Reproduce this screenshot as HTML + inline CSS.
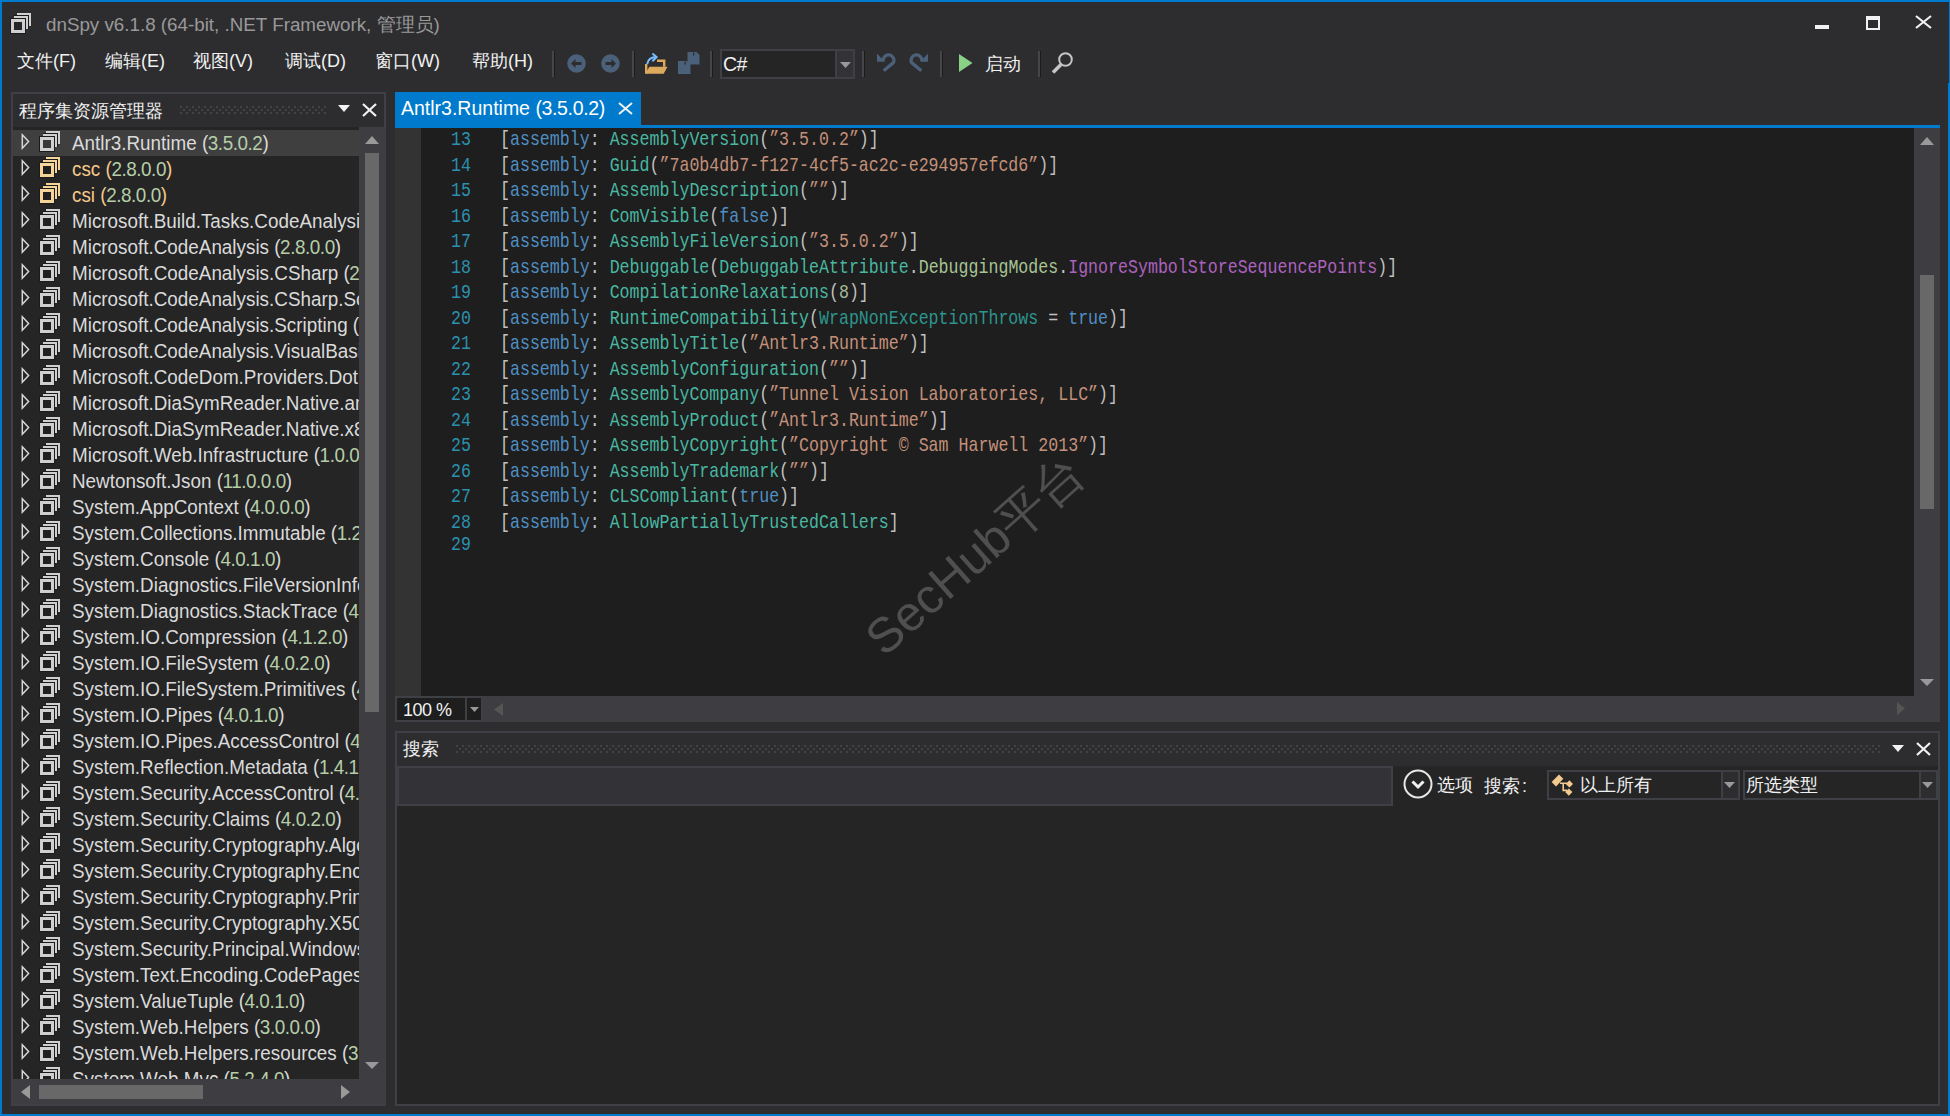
<!DOCTYPE html>
<html><head><meta charset="utf-8">
<style>
*{margin:0;padding:0;box-sizing:border-box}
html,body{width:1950px;height:1116px;overflow:hidden;background:#2d2d30}
body{position:relative;font-family:"Liberation Sans",sans-serif;color:#f1f1f1}
.a{position:absolute}
.t{position:absolute;white-space:nowrap;line-height:1}
.sep{position:absolute;top:51px;width:3px;height:26px;border-left:2px solid #46464a;border-right:1px solid #1b1b1c}

.tr{left:59px;font-size:19.3px;transform:scaleX(0.978);transform-origin:0 0}
.cl{position:absolute;left:0;white-space:pre;font-family:"Liberation Mono",monospace;font-size:16.63px;line-height:1;transform:scaleY(1.25);transform-origin:0 0}
.ln{display:inline-block;width:50px;text-align:right;margin-right:29px;color:#2b91af}
</style></head><body>
<!-- window border -->
<div class="a" style="left:0;top:0;width:1950px;height:2px;background:#007acc"></div>
<div class="a" style="left:0;top:0;width:2px;height:1116px;background:#007acc"></div>
<div class="a" style="left:1948px;top:83px;width:2px;height:1033px;background:#007acc"></div>
<div class="a" style="left:1949px;top:0;width:1px;height:83px;background:#007acc"></div>
<div class="a" style="left:0;top:1114px;width:1950px;height:2px;background:#007acc"></div>

<!-- title bar -->
<svg class="a" style="left:10px;top:12px" width="22" height="22" viewBox="0 0 22 22" fill="none"><path d="M7 2h13v12" stroke="#cfcfcf" stroke-width="2"/><path d="M4 5h13v12" stroke="#1b1b1c" stroke-width="4"/><path d="M4 5h13v12" stroke="#cfcfcf" stroke-width="2"/><rect x="1" y="7" width="14" height="14" fill="rgba(0,0,0,0.12)" stroke="#1b1b1c" stroke-width="2"/><path d="M2.5 8.5h11v11h-11z" stroke="#cfcfcf" stroke-width="3"/></svg>
<div class="t" id="title" style="left:46px;top:15.5px;font-size:18.8px;color:#999999">dnSpy v6.1.8 (64-bit, .NET Framework, 管理员)</div>
<div class="a" style="left:1815px;top:25px;width:14px;height:4px;background:#f1f1f1"></div>
<div class="a" style="left:1866px;top:16px;width:14px;height:14px;border:2px solid #f1f1f1;border-top-width:4px"></div>
<svg class="a" style="left:1915px;top:15px" width="17" height="14" viewBox="0 0 17 14"><path d="M1 1L16 13M16 1L1 13" stroke="#f1f1f1" stroke-width="2.2"/></svg>

<!-- menu -->
<div class="t" style="left:17px;top:52px;font-size:18px;color:#f1f1f1">文件(F)</div>
<div class="t" style="left:105px;top:52px;font-size:18px;color:#f1f1f1">编辑(E)</div>
<div class="t" style="left:193px;top:52px;font-size:18px;color:#f1f1f1">视图(V)</div>
<div class="t" style="left:285px;top:52px;font-size:18px;color:#f1f1f1">调试(D)</div>
<div class="t" style="left:375px;top:52px;font-size:18px;color:#f1f1f1">窗口(W)</div>
<div class="t" style="left:472px;top:52px;font-size:18px;color:#f1f1f1">帮助(H)</div>

<!-- toolbar -->
<div class="sep" style="left:552px"></div>
<svg class="a" style="left:567px;top:54px" width="19" height="19" viewBox="0 0 19 19"><circle cx="9.5" cy="9.5" r="9.3" fill="#4b6079"/><path d="M4 9.5L8.5 5v3h6v3h-6v3z" fill="#2d2d30"/></svg>
<svg class="a" style="left:601px;top:54px" width="19" height="19" viewBox="0 0 19 19"><circle cx="9.5" cy="9.5" r="9.3" fill="#4b6079"/><path d="M15 9.5L10.5 5v3h-6v3h6v3z" fill="#2d2d30"/></svg>
<div class="sep" style="left:632px"></div>
<svg class="a" style="left:644px;top:52px" width="24" height="23" viewBox="0 0 24 23">
 <path d="M2.2 12v9.5M13 8.8h7.2v6" fill="none" stroke="#dcaa5c" stroke-width="2.4"/>
 <path d="M5.4 14.8H23.5L19.7 21.8H1.2z" fill="#dcaa5c"/>
 <path d="M3.2 12C4 7 7.5 5 12.5 5" fill="none" stroke="#75beff" stroke-width="2"/>
 <path d="M8.4 1.5L12.6 5 8.4 9.2" fill="none" stroke="#75beff" stroke-width="2"/>
</svg>
<svg class="a" style="left:678px;top:52px" width="22" height="22" viewBox="0 0 22 22">
 <path d="M9.5 0h9l3 3v9.5h-12z" fill="#4b6079"/><rect x="15" y="0.5" width="1.3" height="3" fill="#2d2d30"/>
 <path d="M0 9h9l3.5 3.5v9.5h-12.5z" fill="#4b6079" stroke="#2d2d30" stroke-width="0"/><rect x="6.5" y="9.5" width="1.3" height="3" fill="#2d2d30"/>
</svg>
<div class="sep" style="left:710px"></div>
<div class="a" style="left:720px;top:49px;width:135px;height:30px;background:#3f3f46"></div>
<div class="a" style="left:722px;top:51px;width:113px;height:26px;background:#252526"></div>
<div class="a" style="left:837px;top:51px;width:16px;height:26px;background:#333337"></div>
<div class="t" style="left:723px;top:54.5px;font-size:19.5px;letter-spacing:-0.5px;color:#f1f1f1">C#</div>
<svg class="a" style="left:840px;top:62px" width="11" height="6" viewBox="0 0 11 6"><path d="M0 0h11L5.5 6z" fill="#999"/></svg>
<div class="sep" style="left:862px"></div>
<svg class="a" style="left:876px;top:52px" width="20" height="22" viewBox="0 0 20 22">
 <path d="M1 1.5V9.8H8.8z" fill="#4b6079"/>
 <path d="M7.2 9.2A5.4 5.4 0 1 1 17.4 10.6L7.7 18.8" fill="none" stroke="#4b6079" stroke-width="3.3"/>
</svg>
<svg class="a" style="left:909px;top:52px" width="20" height="22" viewBox="0 0 20 22">
 <g transform="translate(20,0) scale(-1,1)">
 <path d="M1 1.5V9.8H8.8z" fill="#4b6079"/>
 <path d="M7.2 9.2A5.4 5.4 0 1 1 17.4 10.6L7.7 18.8" fill="none" stroke="#4b6079" stroke-width="3.3"/>
 </g>
</svg>
<div class="sep" style="left:940px"></div>
<svg class="a" style="left:959px;top:54px" width="14" height="18" viewBox="0 0 14 18"><path d="M0 0L13.5 9 0 18z" fill="#89d185"/></svg>
<div class="t" style="left:985px;top:54.5px;font-size:18px;color:#f1f1f1">启动</div>
<div class="sep" style="left:1038px"></div>
<svg class="a" style="left:1051px;top:52px" width="23" height="22" viewBox="0 0 23 22">
 <circle cx="14.5" cy="7.5" r="6.3" fill="none" stroke="#c5c5c5" stroke-width="2"/>
 <path d="M10 12.5L2 20.5" stroke="#c5c5c5" stroke-width="3.5"/>
</svg>

<!-- LEFT PANEL -->
<div class="a" style="left:11px;top:92px;width:375px;height:1014px;border:2px solid #3f3f46;background:#2d2d30"></div>
<div class="t" style="left:19px;top:101.5px;font-size:18px;color:#f1f1f1">程序集资源管理器</div>
<svg class="a" style="left:180px;top:106px" width="146" height="8"><defs><pattern id="g1" width="6" height="6" patternUnits="userSpaceOnUse"><rect x="0" y="0" width="2" height="2" fill="#434347"/><rect x="3" y="3" width="2" height="2" fill="#434347"/></pattern></defs><rect width="146" height="8" fill="url(#g1)"/></svg>
<svg class="a" style="left:338px;top:105px" width="12" height="7" viewBox="0 0 12 7"><path d="M0 0h12L6 7z" fill="#f1f1f1"/></svg>
<svg class="a" style="left:362px;top:103px" width="15" height="14" viewBox="0 0 15 14"><path d="M1 1L14 13M14 1L1 13" stroke="#f1f1f1" stroke-width="2.2"/></svg>

<div class="a" style="left:13px;top:127px;width:346px;height:952px;background:#252526;overflow:hidden">
<div class="a" style="left:0;top:3px;width:346px;height:26px;background:#3f3f40"></div>
<svg class="a" style="left:8px;top:6px" width="10" height="17" viewBox="0 0 10 17"><path d="M1.3 1.8L7.6 8.5 1.3 15.2z" fill="none" stroke="#d6d6d6" stroke-width="1.5"/></svg>
<svg class="a" style="left:26px;top:3px" width="22" height="22" viewBox="0 0 22 22" fill="none"><path d="M7 2h13v12" stroke="#cfcfcf" stroke-width="2"/><path d="M4 5h13v12" stroke="#1b1b1b" stroke-width="4"/><path d="M4 5h13v12" stroke="#cfcfcf" stroke-width="2"/><rect x="1" y="7" width="14" height="14" fill="rgba(0,0,0,0.12)" stroke="#1b1b1b" stroke-width="2"/><path d="M2.5 8.5h11v11h-11z" stroke="#cfcfcf" stroke-width="3"/></svg>
<div class="t tr" style="top:7px;color:#dadada">Antlr3.Runtime <span style="letter-spacing:-0.45px">(<span style="color:#b5cea8">3.5.0.2</span>)</span></div>
<svg class="a" style="left:8px;top:32px" width="10" height="17" viewBox="0 0 10 17"><path d="M1.3 1.8L7.6 8.5 1.3 15.2z" fill="none" stroke="#d6d6d6" stroke-width="1.5"/></svg>
<svg class="a" style="left:26px;top:29px" width="22" height="22" viewBox="0 0 22 22" fill="none"><path d="M7 2h13v12" stroke="#f5d49a" stroke-width="2"/><path d="M4 5h13v12" stroke="#1b1b1b" stroke-width="4"/><path d="M4 5h13v12" stroke="#f5d49a" stroke-width="2"/><rect x="1" y="7" width="14" height="14" fill="rgba(0,0,0,0.12)" stroke="#1b1b1b" stroke-width="2"/><path d="M2.5 8.5h11v11h-11z" stroke="#f5d49a" stroke-width="3"/></svg>
<div class="t tr" style="top:33px;color:#f5c98b">csc <span style="letter-spacing:-0.45px">(<span style="color:#b5cea8">2.8.0.0</span>)</span></div>
<svg class="a" style="left:8px;top:58px" width="10" height="17" viewBox="0 0 10 17"><path d="M1.3 1.8L7.6 8.5 1.3 15.2z" fill="none" stroke="#d6d6d6" stroke-width="1.5"/></svg>
<svg class="a" style="left:26px;top:55px" width="22" height="22" viewBox="0 0 22 22" fill="none"><path d="M7 2h13v12" stroke="#f5d49a" stroke-width="2"/><path d="M4 5h13v12" stroke="#1b1b1b" stroke-width="4"/><path d="M4 5h13v12" stroke="#f5d49a" stroke-width="2"/><rect x="1" y="7" width="14" height="14" fill="rgba(0,0,0,0.12)" stroke="#1b1b1b" stroke-width="2"/><path d="M2.5 8.5h11v11h-11z" stroke="#f5d49a" stroke-width="3"/></svg>
<div class="t tr" style="top:59px;color:#f5c98b">csi <span style="letter-spacing:-0.45px">(<span style="color:#b5cea8">2.8.0.0</span>)</span></div>
<svg class="a" style="left:8px;top:84px" width="10" height="17" viewBox="0 0 10 17"><path d="M1.3 1.8L7.6 8.5 1.3 15.2z" fill="none" stroke="#d6d6d6" stroke-width="1.5"/></svg>
<svg class="a" style="left:26px;top:81px" width="22" height="22" viewBox="0 0 22 22" fill="none"><path d="M7 2h13v12" stroke="#cfcfcf" stroke-width="2"/><path d="M4 5h13v12" stroke="#1b1b1b" stroke-width="4"/><path d="M4 5h13v12" stroke="#cfcfcf" stroke-width="2"/><rect x="1" y="7" width="14" height="14" fill="rgba(0,0,0,0.12)" stroke="#1b1b1b" stroke-width="2"/><path d="M2.5 8.5h11v11h-11z" stroke="#cfcfcf" stroke-width="3"/></svg>
<div class="t tr" style="top:85px;color:#dadada">Microsoft.Build.Tasks.CodeAnalysis <span style="letter-spacing:-0.45px">(<span style="color:#b5cea8">2.8.0.0</span>)</span></div>
<svg class="a" style="left:8px;top:110px" width="10" height="17" viewBox="0 0 10 17"><path d="M1.3 1.8L7.6 8.5 1.3 15.2z" fill="none" stroke="#d6d6d6" stroke-width="1.5"/></svg>
<svg class="a" style="left:26px;top:107px" width="22" height="22" viewBox="0 0 22 22" fill="none"><path d="M7 2h13v12" stroke="#cfcfcf" stroke-width="2"/><path d="M4 5h13v12" stroke="#1b1b1b" stroke-width="4"/><path d="M4 5h13v12" stroke="#cfcfcf" stroke-width="2"/><rect x="1" y="7" width="14" height="14" fill="rgba(0,0,0,0.12)" stroke="#1b1b1b" stroke-width="2"/><path d="M2.5 8.5h11v11h-11z" stroke="#cfcfcf" stroke-width="3"/></svg>
<div class="t tr" style="top:111px;color:#dadada">Microsoft.CodeAnalysis <span style="letter-spacing:-0.45px">(<span style="color:#b5cea8">2.8.0.0</span>)</span></div>
<svg class="a" style="left:8px;top:136px" width="10" height="17" viewBox="0 0 10 17"><path d="M1.3 1.8L7.6 8.5 1.3 15.2z" fill="none" stroke="#d6d6d6" stroke-width="1.5"/></svg>
<svg class="a" style="left:26px;top:133px" width="22" height="22" viewBox="0 0 22 22" fill="none"><path d="M7 2h13v12" stroke="#cfcfcf" stroke-width="2"/><path d="M4 5h13v12" stroke="#1b1b1b" stroke-width="4"/><path d="M4 5h13v12" stroke="#cfcfcf" stroke-width="2"/><rect x="1" y="7" width="14" height="14" fill="rgba(0,0,0,0.12)" stroke="#1b1b1b" stroke-width="2"/><path d="M2.5 8.5h11v11h-11z" stroke="#cfcfcf" stroke-width="3"/></svg>
<div class="t tr" style="top:137px;color:#dadada">Microsoft.CodeAnalysis.CSharp <span style="letter-spacing:-0.45px">(<span style="color:#b5cea8">2.8.0.0</span>)</span></div>
<svg class="a" style="left:8px;top:162px" width="10" height="17" viewBox="0 0 10 17"><path d="M1.3 1.8L7.6 8.5 1.3 15.2z" fill="none" stroke="#d6d6d6" stroke-width="1.5"/></svg>
<svg class="a" style="left:26px;top:159px" width="22" height="22" viewBox="0 0 22 22" fill="none"><path d="M7 2h13v12" stroke="#cfcfcf" stroke-width="2"/><path d="M4 5h13v12" stroke="#1b1b1b" stroke-width="4"/><path d="M4 5h13v12" stroke="#cfcfcf" stroke-width="2"/><rect x="1" y="7" width="14" height="14" fill="rgba(0,0,0,0.12)" stroke="#1b1b1b" stroke-width="2"/><path d="M2.5 8.5h11v11h-11z" stroke="#cfcfcf" stroke-width="3"/></svg>
<div class="t tr" style="top:163px;color:#dadada">Microsoft.CodeAnalysis.CSharp.Scripting <span style="letter-spacing:-0.45px">(<span style="color:#b5cea8">2.8.0.0</span>)</span></div>
<svg class="a" style="left:8px;top:188px" width="10" height="17" viewBox="0 0 10 17"><path d="M1.3 1.8L7.6 8.5 1.3 15.2z" fill="none" stroke="#d6d6d6" stroke-width="1.5"/></svg>
<svg class="a" style="left:26px;top:185px" width="22" height="22" viewBox="0 0 22 22" fill="none"><path d="M7 2h13v12" stroke="#cfcfcf" stroke-width="2"/><path d="M4 5h13v12" stroke="#1b1b1b" stroke-width="4"/><path d="M4 5h13v12" stroke="#cfcfcf" stroke-width="2"/><rect x="1" y="7" width="14" height="14" fill="rgba(0,0,0,0.12)" stroke="#1b1b1b" stroke-width="2"/><path d="M2.5 8.5h11v11h-11z" stroke="#cfcfcf" stroke-width="3"/></svg>
<div class="t tr" style="top:189px;color:#dadada">Microsoft.CodeAnalysis.Scripting <span style="letter-spacing:-0.45px">(<span style="color:#b5cea8">2.8.0.0</span>)</span></div>
<svg class="a" style="left:8px;top:214px" width="10" height="17" viewBox="0 0 10 17"><path d="M1.3 1.8L7.6 8.5 1.3 15.2z" fill="none" stroke="#d6d6d6" stroke-width="1.5"/></svg>
<svg class="a" style="left:26px;top:211px" width="22" height="22" viewBox="0 0 22 22" fill="none"><path d="M7 2h13v12" stroke="#cfcfcf" stroke-width="2"/><path d="M4 5h13v12" stroke="#1b1b1b" stroke-width="4"/><path d="M4 5h13v12" stroke="#cfcfcf" stroke-width="2"/><rect x="1" y="7" width="14" height="14" fill="rgba(0,0,0,0.12)" stroke="#1b1b1b" stroke-width="2"/><path d="M2.5 8.5h11v11h-11z" stroke="#cfcfcf" stroke-width="3"/></svg>
<div class="t tr" style="top:215px;color:#dadada">Microsoft.CodeAnalysis.VisualBasic <span style="letter-spacing:-0.45px">(<span style="color:#b5cea8">2.8.0.0</span>)</span></div>
<svg class="a" style="left:8px;top:240px" width="10" height="17" viewBox="0 0 10 17"><path d="M1.3 1.8L7.6 8.5 1.3 15.2z" fill="none" stroke="#d6d6d6" stroke-width="1.5"/></svg>
<svg class="a" style="left:26px;top:237px" width="22" height="22" viewBox="0 0 22 22" fill="none"><path d="M7 2h13v12" stroke="#cfcfcf" stroke-width="2"/><path d="M4 5h13v12" stroke="#1b1b1b" stroke-width="4"/><path d="M4 5h13v12" stroke="#cfcfcf" stroke-width="2"/><rect x="1" y="7" width="14" height="14" fill="rgba(0,0,0,0.12)" stroke="#1b1b1b" stroke-width="2"/><path d="M2.5 8.5h11v11h-11z" stroke="#cfcfcf" stroke-width="3"/></svg>
<div class="t tr" style="top:241px;color:#dadada">Microsoft.CodeDom.Providers.DotNetCompilerPlatform <span style="letter-spacing:-0.45px">(<span style="color:#b5cea8">2.0.0.0</span>)</span></div>
<svg class="a" style="left:8px;top:266px" width="10" height="17" viewBox="0 0 10 17"><path d="M1.3 1.8L7.6 8.5 1.3 15.2z" fill="none" stroke="#d6d6d6" stroke-width="1.5"/></svg>
<svg class="a" style="left:26px;top:263px" width="22" height="22" viewBox="0 0 22 22" fill="none"><path d="M7 2h13v12" stroke="#cfcfcf" stroke-width="2"/><path d="M4 5h13v12" stroke="#1b1b1b" stroke-width="4"/><path d="M4 5h13v12" stroke="#cfcfcf" stroke-width="2"/><rect x="1" y="7" width="14" height="14" fill="rgba(0,0,0,0.12)" stroke="#1b1b1b" stroke-width="2"/><path d="M2.5 8.5h11v11h-11z" stroke="#cfcfcf" stroke-width="3"/></svg>
<div class="t tr" style="top:267px;color:#dadada">Microsoft.DiaSymReader.Native.amd64</div>
<svg class="a" style="left:8px;top:292px" width="10" height="17" viewBox="0 0 10 17"><path d="M1.3 1.8L7.6 8.5 1.3 15.2z" fill="none" stroke="#d6d6d6" stroke-width="1.5"/></svg>
<svg class="a" style="left:26px;top:289px" width="22" height="22" viewBox="0 0 22 22" fill="none"><path d="M7 2h13v12" stroke="#cfcfcf" stroke-width="2"/><path d="M4 5h13v12" stroke="#1b1b1b" stroke-width="4"/><path d="M4 5h13v12" stroke="#cfcfcf" stroke-width="2"/><rect x="1" y="7" width="14" height="14" fill="rgba(0,0,0,0.12)" stroke="#1b1b1b" stroke-width="2"/><path d="M2.5 8.5h11v11h-11z" stroke="#cfcfcf" stroke-width="3"/></svg>
<div class="t tr" style="top:293px;color:#dadada">Microsoft.DiaSymReader.Native.x86</div>
<svg class="a" style="left:8px;top:318px" width="10" height="17" viewBox="0 0 10 17"><path d="M1.3 1.8L7.6 8.5 1.3 15.2z" fill="none" stroke="#d6d6d6" stroke-width="1.5"/></svg>
<svg class="a" style="left:26px;top:315px" width="22" height="22" viewBox="0 0 22 22" fill="none"><path d="M7 2h13v12" stroke="#cfcfcf" stroke-width="2"/><path d="M4 5h13v12" stroke="#1b1b1b" stroke-width="4"/><path d="M4 5h13v12" stroke="#cfcfcf" stroke-width="2"/><rect x="1" y="7" width="14" height="14" fill="rgba(0,0,0,0.12)" stroke="#1b1b1b" stroke-width="2"/><path d="M2.5 8.5h11v11h-11z" stroke="#cfcfcf" stroke-width="3"/></svg>
<div class="t tr" style="top:319px;color:#dadada">Microsoft.Web.Infrastructure <span style="letter-spacing:-0.45px">(<span style="color:#b5cea8">1.0.0.0</span>)</span></div>
<svg class="a" style="left:8px;top:344px" width="10" height="17" viewBox="0 0 10 17"><path d="M1.3 1.8L7.6 8.5 1.3 15.2z" fill="none" stroke="#d6d6d6" stroke-width="1.5"/></svg>
<svg class="a" style="left:26px;top:341px" width="22" height="22" viewBox="0 0 22 22" fill="none"><path d="M7 2h13v12" stroke="#cfcfcf" stroke-width="2"/><path d="M4 5h13v12" stroke="#1b1b1b" stroke-width="4"/><path d="M4 5h13v12" stroke="#cfcfcf" stroke-width="2"/><rect x="1" y="7" width="14" height="14" fill="rgba(0,0,0,0.12)" stroke="#1b1b1b" stroke-width="2"/><path d="M2.5 8.5h11v11h-11z" stroke="#cfcfcf" stroke-width="3"/></svg>
<div class="t tr" style="top:345px;color:#dadada">Newtonsoft.Json <span style="letter-spacing:-0.45px">(<span style="color:#b5cea8">11.0.0.0</span>)</span></div>
<svg class="a" style="left:8px;top:370px" width="10" height="17" viewBox="0 0 10 17"><path d="M1.3 1.8L7.6 8.5 1.3 15.2z" fill="none" stroke="#d6d6d6" stroke-width="1.5"/></svg>
<svg class="a" style="left:26px;top:367px" width="22" height="22" viewBox="0 0 22 22" fill="none"><path d="M7 2h13v12" stroke="#cfcfcf" stroke-width="2"/><path d="M4 5h13v12" stroke="#1b1b1b" stroke-width="4"/><path d="M4 5h13v12" stroke="#cfcfcf" stroke-width="2"/><rect x="1" y="7" width="14" height="14" fill="rgba(0,0,0,0.12)" stroke="#1b1b1b" stroke-width="2"/><path d="M2.5 8.5h11v11h-11z" stroke="#cfcfcf" stroke-width="3"/></svg>
<div class="t tr" style="top:371px;color:#dadada">System.AppContext <span style="letter-spacing:-0.45px">(<span style="color:#b5cea8">4.0.0.0</span>)</span></div>
<svg class="a" style="left:8px;top:396px" width="10" height="17" viewBox="0 0 10 17"><path d="M1.3 1.8L7.6 8.5 1.3 15.2z" fill="none" stroke="#d6d6d6" stroke-width="1.5"/></svg>
<svg class="a" style="left:26px;top:393px" width="22" height="22" viewBox="0 0 22 22" fill="none"><path d="M7 2h13v12" stroke="#cfcfcf" stroke-width="2"/><path d="M4 5h13v12" stroke="#1b1b1b" stroke-width="4"/><path d="M4 5h13v12" stroke="#cfcfcf" stroke-width="2"/><rect x="1" y="7" width="14" height="14" fill="rgba(0,0,0,0.12)" stroke="#1b1b1b" stroke-width="2"/><path d="M2.5 8.5h11v11h-11z" stroke="#cfcfcf" stroke-width="3"/></svg>
<div class="t tr" style="top:397px;color:#dadada">System.Collections.Immutable <span style="letter-spacing:-0.45px">(<span style="color:#b5cea8">1.2.3.0</span>)</span></div>
<svg class="a" style="left:8px;top:422px" width="10" height="17" viewBox="0 0 10 17"><path d="M1.3 1.8L7.6 8.5 1.3 15.2z" fill="none" stroke="#d6d6d6" stroke-width="1.5"/></svg>
<svg class="a" style="left:26px;top:419px" width="22" height="22" viewBox="0 0 22 22" fill="none"><path d="M7 2h13v12" stroke="#cfcfcf" stroke-width="2"/><path d="M4 5h13v12" stroke="#1b1b1b" stroke-width="4"/><path d="M4 5h13v12" stroke="#cfcfcf" stroke-width="2"/><rect x="1" y="7" width="14" height="14" fill="rgba(0,0,0,0.12)" stroke="#1b1b1b" stroke-width="2"/><path d="M2.5 8.5h11v11h-11z" stroke="#cfcfcf" stroke-width="3"/></svg>
<div class="t tr" style="top:423px;color:#dadada">System.Console <span style="letter-spacing:-0.45px">(<span style="color:#b5cea8">4.0.1.0</span>)</span></div>
<svg class="a" style="left:8px;top:448px" width="10" height="17" viewBox="0 0 10 17"><path d="M1.3 1.8L7.6 8.5 1.3 15.2z" fill="none" stroke="#d6d6d6" stroke-width="1.5"/></svg>
<svg class="a" style="left:26px;top:445px" width="22" height="22" viewBox="0 0 22 22" fill="none"><path d="M7 2h13v12" stroke="#cfcfcf" stroke-width="2"/><path d="M4 5h13v12" stroke="#1b1b1b" stroke-width="4"/><path d="M4 5h13v12" stroke="#cfcfcf" stroke-width="2"/><rect x="1" y="7" width="14" height="14" fill="rgba(0,0,0,0.12)" stroke="#1b1b1b" stroke-width="2"/><path d="M2.5 8.5h11v11h-11z" stroke="#cfcfcf" stroke-width="3"/></svg>
<div class="t tr" style="top:449px;color:#dadada">System.Diagnostics.FileVersionInfo <span style="letter-spacing:-0.45px">(<span style="color:#b5cea8">4.0.2.0</span>)</span></div>
<svg class="a" style="left:8px;top:474px" width="10" height="17" viewBox="0 0 10 17"><path d="M1.3 1.8L7.6 8.5 1.3 15.2z" fill="none" stroke="#d6d6d6" stroke-width="1.5"/></svg>
<svg class="a" style="left:26px;top:471px" width="22" height="22" viewBox="0 0 22 22" fill="none"><path d="M7 2h13v12" stroke="#cfcfcf" stroke-width="2"/><path d="M4 5h13v12" stroke="#1b1b1b" stroke-width="4"/><path d="M4 5h13v12" stroke="#cfcfcf" stroke-width="2"/><rect x="1" y="7" width="14" height="14" fill="rgba(0,0,0,0.12)" stroke="#1b1b1b" stroke-width="2"/><path d="M2.5 8.5h11v11h-11z" stroke="#cfcfcf" stroke-width="3"/></svg>
<div class="t tr" style="top:475px;color:#dadada">System.Diagnostics.StackTrace <span style="letter-spacing:-0.45px">(<span style="color:#b5cea8">4.0.4.0</span>)</span></div>
<svg class="a" style="left:8px;top:500px" width="10" height="17" viewBox="0 0 10 17"><path d="M1.3 1.8L7.6 8.5 1.3 15.2z" fill="none" stroke="#d6d6d6" stroke-width="1.5"/></svg>
<svg class="a" style="left:26px;top:497px" width="22" height="22" viewBox="0 0 22 22" fill="none"><path d="M7 2h13v12" stroke="#cfcfcf" stroke-width="2"/><path d="M4 5h13v12" stroke="#1b1b1b" stroke-width="4"/><path d="M4 5h13v12" stroke="#cfcfcf" stroke-width="2"/><rect x="1" y="7" width="14" height="14" fill="rgba(0,0,0,0.12)" stroke="#1b1b1b" stroke-width="2"/><path d="M2.5 8.5h11v11h-11z" stroke="#cfcfcf" stroke-width="3"/></svg>
<div class="t tr" style="top:501px;color:#dadada">System.IO.Compression <span style="letter-spacing:-0.45px">(<span style="color:#b5cea8">4.1.2.0</span>)</span></div>
<svg class="a" style="left:8px;top:526px" width="10" height="17" viewBox="0 0 10 17"><path d="M1.3 1.8L7.6 8.5 1.3 15.2z" fill="none" stroke="#d6d6d6" stroke-width="1.5"/></svg>
<svg class="a" style="left:26px;top:523px" width="22" height="22" viewBox="0 0 22 22" fill="none"><path d="M7 2h13v12" stroke="#cfcfcf" stroke-width="2"/><path d="M4 5h13v12" stroke="#1b1b1b" stroke-width="4"/><path d="M4 5h13v12" stroke="#cfcfcf" stroke-width="2"/><rect x="1" y="7" width="14" height="14" fill="rgba(0,0,0,0.12)" stroke="#1b1b1b" stroke-width="2"/><path d="M2.5 8.5h11v11h-11z" stroke="#cfcfcf" stroke-width="3"/></svg>
<div class="t tr" style="top:527px;color:#dadada">System.IO.FileSystem <span style="letter-spacing:-0.45px">(<span style="color:#b5cea8">4.0.2.0</span>)</span></div>
<svg class="a" style="left:8px;top:552px" width="10" height="17" viewBox="0 0 10 17"><path d="M1.3 1.8L7.6 8.5 1.3 15.2z" fill="none" stroke="#d6d6d6" stroke-width="1.5"/></svg>
<svg class="a" style="left:26px;top:549px" width="22" height="22" viewBox="0 0 22 22" fill="none"><path d="M7 2h13v12" stroke="#cfcfcf" stroke-width="2"/><path d="M4 5h13v12" stroke="#1b1b1b" stroke-width="4"/><path d="M4 5h13v12" stroke="#cfcfcf" stroke-width="2"/><rect x="1" y="7" width="14" height="14" fill="rgba(0,0,0,0.12)" stroke="#1b1b1b" stroke-width="2"/><path d="M2.5 8.5h11v11h-11z" stroke="#cfcfcf" stroke-width="3"/></svg>
<div class="t tr" style="top:553px;color:#dadada">System.IO.FileSystem.Primitives <span style="letter-spacing:-0.45px">(<span style="color:#b5cea8">4.0.2.0</span>)</span></div>
<svg class="a" style="left:8px;top:578px" width="10" height="17" viewBox="0 0 10 17"><path d="M1.3 1.8L7.6 8.5 1.3 15.2z" fill="none" stroke="#d6d6d6" stroke-width="1.5"/></svg>
<svg class="a" style="left:26px;top:575px" width="22" height="22" viewBox="0 0 22 22" fill="none"><path d="M7 2h13v12" stroke="#cfcfcf" stroke-width="2"/><path d="M4 5h13v12" stroke="#1b1b1b" stroke-width="4"/><path d="M4 5h13v12" stroke="#cfcfcf" stroke-width="2"/><rect x="1" y="7" width="14" height="14" fill="rgba(0,0,0,0.12)" stroke="#1b1b1b" stroke-width="2"/><path d="M2.5 8.5h11v11h-11z" stroke="#cfcfcf" stroke-width="3"/></svg>
<div class="t tr" style="top:579px;color:#dadada">System.IO.Pipes <span style="letter-spacing:-0.45px">(<span style="color:#b5cea8">4.0.1.0</span>)</span></div>
<svg class="a" style="left:8px;top:604px" width="10" height="17" viewBox="0 0 10 17"><path d="M1.3 1.8L7.6 8.5 1.3 15.2z" fill="none" stroke="#d6d6d6" stroke-width="1.5"/></svg>
<svg class="a" style="left:26px;top:601px" width="22" height="22" viewBox="0 0 22 22" fill="none"><path d="M7 2h13v12" stroke="#cfcfcf" stroke-width="2"/><path d="M4 5h13v12" stroke="#1b1b1b" stroke-width="4"/><path d="M4 5h13v12" stroke="#cfcfcf" stroke-width="2"/><rect x="1" y="7" width="14" height="14" fill="rgba(0,0,0,0.12)" stroke="#1b1b1b" stroke-width="2"/><path d="M2.5 8.5h11v11h-11z" stroke="#cfcfcf" stroke-width="3"/></svg>
<div class="t tr" style="top:605px;color:#dadada">System.IO.Pipes.AccessControl <span style="letter-spacing:-0.45px">(<span style="color:#b5cea8">4.0.1.0</span>)</span></div>
<svg class="a" style="left:8px;top:630px" width="10" height="17" viewBox="0 0 10 17"><path d="M1.3 1.8L7.6 8.5 1.3 15.2z" fill="none" stroke="#d6d6d6" stroke-width="1.5"/></svg>
<svg class="a" style="left:26px;top:627px" width="22" height="22" viewBox="0 0 22 22" fill="none"><path d="M7 2h13v12" stroke="#cfcfcf" stroke-width="2"/><path d="M4 5h13v12" stroke="#1b1b1b" stroke-width="4"/><path d="M4 5h13v12" stroke="#cfcfcf" stroke-width="2"/><rect x="1" y="7" width="14" height="14" fill="rgba(0,0,0,0.12)" stroke="#1b1b1b" stroke-width="2"/><path d="M2.5 8.5h11v11h-11z" stroke="#cfcfcf" stroke-width="3"/></svg>
<div class="t tr" style="top:631px;color:#dadada">System.Reflection.Metadata <span style="letter-spacing:-0.45px">(<span style="color:#b5cea8">1.4.1.0</span>)</span></div>
<svg class="a" style="left:8px;top:656px" width="10" height="17" viewBox="0 0 10 17"><path d="M1.3 1.8L7.6 8.5 1.3 15.2z" fill="none" stroke="#d6d6d6" stroke-width="1.5"/></svg>
<svg class="a" style="left:26px;top:653px" width="22" height="22" viewBox="0 0 22 22" fill="none"><path d="M7 2h13v12" stroke="#cfcfcf" stroke-width="2"/><path d="M4 5h13v12" stroke="#1b1b1b" stroke-width="4"/><path d="M4 5h13v12" stroke="#cfcfcf" stroke-width="2"/><rect x="1" y="7" width="14" height="14" fill="rgba(0,0,0,0.12)" stroke="#1b1b1b" stroke-width="2"/><path d="M2.5 8.5h11v11h-11z" stroke="#cfcfcf" stroke-width="3"/></svg>
<div class="t tr" style="top:657px;color:#dadada">System.Security.AccessControl <span style="letter-spacing:-0.45px">(<span style="color:#b5cea8">4.0.1.0</span>)</span></div>
<svg class="a" style="left:8px;top:682px" width="10" height="17" viewBox="0 0 10 17"><path d="M1.3 1.8L7.6 8.5 1.3 15.2z" fill="none" stroke="#d6d6d6" stroke-width="1.5"/></svg>
<svg class="a" style="left:26px;top:679px" width="22" height="22" viewBox="0 0 22 22" fill="none"><path d="M7 2h13v12" stroke="#cfcfcf" stroke-width="2"/><path d="M4 5h13v12" stroke="#1b1b1b" stroke-width="4"/><path d="M4 5h13v12" stroke="#cfcfcf" stroke-width="2"/><rect x="1" y="7" width="14" height="14" fill="rgba(0,0,0,0.12)" stroke="#1b1b1b" stroke-width="2"/><path d="M2.5 8.5h11v11h-11z" stroke="#cfcfcf" stroke-width="3"/></svg>
<div class="t tr" style="top:683px;color:#dadada">System.Security.Claims <span style="letter-spacing:-0.45px">(<span style="color:#b5cea8">4.0.2.0</span>)</span></div>
<svg class="a" style="left:8px;top:708px" width="10" height="17" viewBox="0 0 10 17"><path d="M1.3 1.8L7.6 8.5 1.3 15.2z" fill="none" stroke="#d6d6d6" stroke-width="1.5"/></svg>
<svg class="a" style="left:26px;top:705px" width="22" height="22" viewBox="0 0 22 22" fill="none"><path d="M7 2h13v12" stroke="#cfcfcf" stroke-width="2"/><path d="M4 5h13v12" stroke="#1b1b1b" stroke-width="4"/><path d="M4 5h13v12" stroke="#cfcfcf" stroke-width="2"/><rect x="1" y="7" width="14" height="14" fill="rgba(0,0,0,0.12)" stroke="#1b1b1b" stroke-width="2"/><path d="M2.5 8.5h11v11h-11z" stroke="#cfcfcf" stroke-width="3"/></svg>
<div class="t tr" style="top:709px;color:#dadada">System.Security.Cryptography.Algorithms <span style="letter-spacing:-0.45px">(<span style="color:#b5cea8">4.2.1.0</span>)</span></div>
<svg class="a" style="left:8px;top:734px" width="10" height="17" viewBox="0 0 10 17"><path d="M1.3 1.8L7.6 8.5 1.3 15.2z" fill="none" stroke="#d6d6d6" stroke-width="1.5"/></svg>
<svg class="a" style="left:26px;top:731px" width="22" height="22" viewBox="0 0 22 22" fill="none"><path d="M7 2h13v12" stroke="#cfcfcf" stroke-width="2"/><path d="M4 5h13v12" stroke="#1b1b1b" stroke-width="4"/><path d="M4 5h13v12" stroke="#cfcfcf" stroke-width="2"/><rect x="1" y="7" width="14" height="14" fill="rgba(0,0,0,0.12)" stroke="#1b1b1b" stroke-width="2"/><path d="M2.5 8.5h11v11h-11z" stroke="#cfcfcf" stroke-width="3"/></svg>
<div class="t tr" style="top:735px;color:#dadada">System.Security.Cryptography.Encoding <span style="letter-spacing:-0.45px">(<span style="color:#b5cea8">4.0.1.0</span>)</span></div>
<svg class="a" style="left:8px;top:760px" width="10" height="17" viewBox="0 0 10 17"><path d="M1.3 1.8L7.6 8.5 1.3 15.2z" fill="none" stroke="#d6d6d6" stroke-width="1.5"/></svg>
<svg class="a" style="left:26px;top:757px" width="22" height="22" viewBox="0 0 22 22" fill="none"><path d="M7 2h13v12" stroke="#cfcfcf" stroke-width="2"/><path d="M4 5h13v12" stroke="#1b1b1b" stroke-width="4"/><path d="M4 5h13v12" stroke="#cfcfcf" stroke-width="2"/><rect x="1" y="7" width="14" height="14" fill="rgba(0,0,0,0.12)" stroke="#1b1b1b" stroke-width="2"/><path d="M2.5 8.5h11v11h-11z" stroke="#cfcfcf" stroke-width="3"/></svg>
<div class="t tr" style="top:761px;color:#dadada">System.Security.Cryptography.Primitives <span style="letter-spacing:-0.45px">(<span style="color:#b5cea8">4.0.1.0</span>)</span></div>
<svg class="a" style="left:8px;top:786px" width="10" height="17" viewBox="0 0 10 17"><path d="M1.3 1.8L7.6 8.5 1.3 15.2z" fill="none" stroke="#d6d6d6" stroke-width="1.5"/></svg>
<svg class="a" style="left:26px;top:783px" width="22" height="22" viewBox="0 0 22 22" fill="none"><path d="M7 2h13v12" stroke="#cfcfcf" stroke-width="2"/><path d="M4 5h13v12" stroke="#1b1b1b" stroke-width="4"/><path d="M4 5h13v12" stroke="#cfcfcf" stroke-width="2"/><rect x="1" y="7" width="14" height="14" fill="rgba(0,0,0,0.12)" stroke="#1b1b1b" stroke-width="2"/><path d="M2.5 8.5h11v11h-11z" stroke="#cfcfcf" stroke-width="3"/></svg>
<div class="t tr" style="top:787px;color:#dadada">System.Security.Cryptography.X509Certificates <span style="letter-spacing:-0.45px">(<span style="color:#b5cea8">4.1.1.0</span>)</span></div>
<svg class="a" style="left:8px;top:812px" width="10" height="17" viewBox="0 0 10 17"><path d="M1.3 1.8L7.6 8.5 1.3 15.2z" fill="none" stroke="#d6d6d6" stroke-width="1.5"/></svg>
<svg class="a" style="left:26px;top:809px" width="22" height="22" viewBox="0 0 22 22" fill="none"><path d="M7 2h13v12" stroke="#cfcfcf" stroke-width="2"/><path d="M4 5h13v12" stroke="#1b1b1b" stroke-width="4"/><path d="M4 5h13v12" stroke="#cfcfcf" stroke-width="2"/><rect x="1" y="7" width="14" height="14" fill="rgba(0,0,0,0.12)" stroke="#1b1b1b" stroke-width="2"/><path d="M2.5 8.5h11v11h-11z" stroke="#cfcfcf" stroke-width="3"/></svg>
<div class="t tr" style="top:813px;color:#dadada">System.Security.Principal.Windows <span style="letter-spacing:-0.45px">(<span style="color:#b5cea8">4.0.1.0</span>)</span></div>
<svg class="a" style="left:8px;top:838px" width="10" height="17" viewBox="0 0 10 17"><path d="M1.3 1.8L7.6 8.5 1.3 15.2z" fill="none" stroke="#d6d6d6" stroke-width="1.5"/></svg>
<svg class="a" style="left:26px;top:835px" width="22" height="22" viewBox="0 0 22 22" fill="none"><path d="M7 2h13v12" stroke="#cfcfcf" stroke-width="2"/><path d="M4 5h13v12" stroke="#1b1b1b" stroke-width="4"/><path d="M4 5h13v12" stroke="#cfcfcf" stroke-width="2"/><rect x="1" y="7" width="14" height="14" fill="rgba(0,0,0,0.12)" stroke="#1b1b1b" stroke-width="2"/><path d="M2.5 8.5h11v11h-11z" stroke="#cfcfcf" stroke-width="3"/></svg>
<div class="t tr" style="top:839px;color:#dadada">System.Text.Encoding.CodePages <span style="letter-spacing:-0.45px">(<span style="color:#b5cea8">4.0.2.0</span>)</span></div>
<svg class="a" style="left:8px;top:864px" width="10" height="17" viewBox="0 0 10 17"><path d="M1.3 1.8L7.6 8.5 1.3 15.2z" fill="none" stroke="#d6d6d6" stroke-width="1.5"/></svg>
<svg class="a" style="left:26px;top:861px" width="22" height="22" viewBox="0 0 22 22" fill="none"><path d="M7 2h13v12" stroke="#cfcfcf" stroke-width="2"/><path d="M4 5h13v12" stroke="#1b1b1b" stroke-width="4"/><path d="M4 5h13v12" stroke="#cfcfcf" stroke-width="2"/><rect x="1" y="7" width="14" height="14" fill="rgba(0,0,0,0.12)" stroke="#1b1b1b" stroke-width="2"/><path d="M2.5 8.5h11v11h-11z" stroke="#cfcfcf" stroke-width="3"/></svg>
<div class="t tr" style="top:865px;color:#dadada">System.ValueTuple <span style="letter-spacing:-0.45px">(<span style="color:#b5cea8">4.0.1.0</span>)</span></div>
<svg class="a" style="left:8px;top:890px" width="10" height="17" viewBox="0 0 10 17"><path d="M1.3 1.8L7.6 8.5 1.3 15.2z" fill="none" stroke="#d6d6d6" stroke-width="1.5"/></svg>
<svg class="a" style="left:26px;top:887px" width="22" height="22" viewBox="0 0 22 22" fill="none"><path d="M7 2h13v12" stroke="#cfcfcf" stroke-width="2"/><path d="M4 5h13v12" stroke="#1b1b1b" stroke-width="4"/><path d="M4 5h13v12" stroke="#cfcfcf" stroke-width="2"/><rect x="1" y="7" width="14" height="14" fill="rgba(0,0,0,0.12)" stroke="#1b1b1b" stroke-width="2"/><path d="M2.5 8.5h11v11h-11z" stroke="#cfcfcf" stroke-width="3"/></svg>
<div class="t tr" style="top:891px;color:#dadada">System.Web.Helpers <span style="letter-spacing:-0.45px">(<span style="color:#b5cea8">3.0.0.0</span>)</span></div>
<svg class="a" style="left:8px;top:916px" width="10" height="17" viewBox="0 0 10 17"><path d="M1.3 1.8L7.6 8.5 1.3 15.2z" fill="none" stroke="#d6d6d6" stroke-width="1.5"/></svg>
<svg class="a" style="left:26px;top:913px" width="22" height="22" viewBox="0 0 22 22" fill="none"><path d="M7 2h13v12" stroke="#cfcfcf" stroke-width="2"/><path d="M4 5h13v12" stroke="#1b1b1b" stroke-width="4"/><path d="M4 5h13v12" stroke="#cfcfcf" stroke-width="2"/><rect x="1" y="7" width="14" height="14" fill="rgba(0,0,0,0.12)" stroke="#1b1b1b" stroke-width="2"/><path d="M2.5 8.5h11v11h-11z" stroke="#cfcfcf" stroke-width="3"/></svg>
<div class="t tr" style="top:917px;color:#dadada">System.Web.Helpers.resources <span style="letter-spacing:-0.45px">(<span style="color:#b5cea8">3.0.0.0</span>)</span></div>
<svg class="a" style="left:8px;top:942px" width="10" height="17" viewBox="0 0 10 17"><path d="M1.3 1.8L7.6 8.5 1.3 15.2z" fill="none" stroke="#d6d6d6" stroke-width="1.5"/></svg>
<svg class="a" style="left:26px;top:939px" width="22" height="22" viewBox="0 0 22 22" fill="none"><path d="M7 2h13v12" stroke="#cfcfcf" stroke-width="2"/><path d="M4 5h13v12" stroke="#1b1b1b" stroke-width="4"/><path d="M4 5h13v12" stroke="#cfcfcf" stroke-width="2"/><rect x="1" y="7" width="14" height="14" fill="rgba(0,0,0,0.12)" stroke="#1b1b1b" stroke-width="2"/><path d="M2.5 8.5h11v11h-11z" stroke="#cfcfcf" stroke-width="3"/></svg>
<div class="t tr" style="top:943px;color:#dadada">System.Web.Mvc <span style="letter-spacing:-0.45px">(<span style="color:#b5cea8">5.2.4.0</span>)</span></div>
</div>
<!-- v scrollbar -->
<div class="a" style="left:359px;top:127px;width:26px;height:952px;background:#3e3e42"></div>
<svg class="a" style="left:365px;top:136px" width="14" height="8" viewBox="0 0 14 8"><path d="M0 8h14L7 0z" fill="#999"/></svg>
<div class="a" style="left:365px;top:153px;width:14px;height:559px;background:#686868"></div>
<svg class="a" style="left:365px;top:1062px" width="14" height="7" viewBox="0 0 14 7"><path d="M0 0h14L7 7z" fill="#999"/></svg>
<!-- h scrollbar -->
<div class="a" style="left:13px;top:1079px;width:372px;height:25px;background:#3e3e42"></div>
<svg class="a" style="left:21px;top:1085px" width="9" height="14" viewBox="0 0 9 14"><path d="M9 0v14L0 7z" fill="#999"/></svg>
<div class="a" style="left:39px;top:1085px;width:164px;height:14px;background:#686868"></div>
<svg class="a" style="left:341px;top:1085px" width="9" height="14" viewBox="0 0 9 14"><path d="M0 0v14L9 7z" fill="#999"/></svg>

<!-- TAB -->
<div class="a" style="left:395px;top:92px;width:246px;height:36px;background:#007acc"></div>
<div class="t" style="left:401px;top:99px;font-size:19.5px;color:#ffffff">Antlr3.Runtime <span style="letter-spacing:-0.35px">(3.5.0.2)</span></div>
<svg class="a" style="left:618px;top:102px" width="15" height="13" viewBox="0 0 15 13"><path d="M1 1L14 12M14 1L1 12" stroke="#f1f1f1" stroke-width="2"/></svg>
<div class="a" style="left:395px;top:125px;width:1545px;height:3px;background:#007acc"></div>

<!-- EDITOR -->
<div class="a" style="left:395px;top:128px;width:26px;height:568px;background:#333333"></div>
<div class="a" style="left:421px;top:128px;width:1493px;height:568px;background:#1e1e1e;overflow:hidden">
<div class="cl" style="top:2.00px"><span class="ln">13</span><span style="color:#c1c1c1">[</span><span style="color:#508fc3">assembly</span><span style="color:#c1c1c1">: </span><span style="color:#49b7a1">AssemblyVersion</span><span style="color:#c1c1c1">(</span><span style="color:#c3907a">”3.5.0.2”</span><span style="color:#c1c1c1">)]</span></div>
<div class="cl" style="top:28.00px"><span class="ln">14</span><span style="color:#c1c1c1">[</span><span style="color:#508fc3">assembly</span><span style="color:#c1c1c1">: </span><span style="color:#49b7a1">Guid</span><span style="color:#c1c1c1">(</span><span style="color:#c3907a">”7a0b4db7-f127-4cf5-ac2c-e294957efcd6”</span><span style="color:#c1c1c1">)]</span></div>
<div class="cl" style="top:53.00px"><span class="ln">15</span><span style="color:#c1c1c1">[</span><span style="color:#508fc3">assembly</span><span style="color:#c1c1c1">: </span><span style="color:#49b7a1">AssemblyDescription</span><span style="color:#c1c1c1">(</span><span style="color:#c3907a">””</span><span style="color:#c1c1c1">)]</span></div>
<div class="cl" style="top:79.00px"><span class="ln">16</span><span style="color:#c1c1c1">[</span><span style="color:#508fc3">assembly</span><span style="color:#c1c1c1">: </span><span style="color:#49b7a1">ComVisible</span><span style="color:#c1c1c1">(</span><span style="color:#508fc3">false</span><span style="color:#c1c1c1">)]</span></div>
<div class="cl" style="top:104.00px"><span class="ln">17</span><span style="color:#c1c1c1">[</span><span style="color:#508fc3">assembly</span><span style="color:#c1c1c1">: </span><span style="color:#49b7a1">AssemblyFileVersion</span><span style="color:#c1c1c1">(</span><span style="color:#c3907a">”3.5.0.2”</span><span style="color:#c1c1c1">)]</span></div>
<div class="cl" style="top:130.00px"><span class="ln">18</span><span style="color:#c1c1c1">[</span><span style="color:#508fc3">assembly</span><span style="color:#c1c1c1">: </span><span style="color:#49b7a1">Debuggable</span><span style="color:#c1c1c1">(</span><span style="color:#49b7a1">DebuggableAttribute</span><span style="color:#c1c1c1">.</span><span style="color:#a8c495">DebuggingModes</span><span style="color:#c1c1c1">.</span><span style="color:#ad62be">IgnoreSymbolStoreSequencePoints</span><span style="color:#c1c1c1">)]</span></div>
<div class="cl" style="top:155.00px"><span class="ln">19</span><span style="color:#c1c1c1">[</span><span style="color:#508fc3">assembly</span><span style="color:#c1c1c1">: </span><span style="color:#49b7a1">CompilationRelaxations</span><span style="color:#c1c1c1">(</span><span style="color:#a5bc9a">8</span><span style="color:#c1c1c1">)]</span></div>
<div class="cl" style="top:181.00px"><span class="ln">20</span><span style="color:#c1c1c1">[</span><span style="color:#508fc3">assembly</span><span style="color:#c1c1c1">: </span><span style="color:#49b7a1">RuntimeCompatibility</span><span style="color:#c1c1c1">(</span><span style="color:#2d958d">WrapNonExceptionThrows</span><span style="color:#c1c1c1"> = </span><span style="color:#508fc3">true</span><span style="color:#c1c1c1">)]</span></div>
<div class="cl" style="top:206.00px"><span class="ln">21</span><span style="color:#c1c1c1">[</span><span style="color:#508fc3">assembly</span><span style="color:#c1c1c1">: </span><span style="color:#49b7a1">AssemblyTitle</span><span style="color:#c1c1c1">(</span><span style="color:#c3907a">”Antlr3.Runtime”</span><span style="color:#c1c1c1">)]</span></div>
<div class="cl" style="top:232.00px"><span class="ln">22</span><span style="color:#c1c1c1">[</span><span style="color:#508fc3">assembly</span><span style="color:#c1c1c1">: </span><span style="color:#49b7a1">AssemblyConfiguration</span><span style="color:#c1c1c1">(</span><span style="color:#c3907a">””</span><span style="color:#c1c1c1">)]</span></div>
<div class="cl" style="top:257.00px"><span class="ln">23</span><span style="color:#c1c1c1">[</span><span style="color:#508fc3">assembly</span><span style="color:#c1c1c1">: </span><span style="color:#49b7a1">AssemblyCompany</span><span style="color:#c1c1c1">(</span><span style="color:#c3907a">”Tunnel Vision Laboratories, LLC”</span><span style="color:#c1c1c1">)]</span></div>
<div class="cl" style="top:283.00px"><span class="ln">24</span><span style="color:#c1c1c1">[</span><span style="color:#508fc3">assembly</span><span style="color:#c1c1c1">: </span><span style="color:#49b7a1">AssemblyProduct</span><span style="color:#c1c1c1">(</span><span style="color:#c3907a">”Antlr3.Runtime”</span><span style="color:#c1c1c1">)]</span></div>
<div class="cl" style="top:308.00px"><span class="ln">25</span><span style="color:#c1c1c1">[</span><span style="color:#508fc3">assembly</span><span style="color:#c1c1c1">: </span><span style="color:#49b7a1">AssemblyCopyright</span><span style="color:#c1c1c1">(</span><span style="color:#c3907a">”Copyright © Sam Harwell 2013”</span><span style="color:#c1c1c1">)]</span></div>
<div class="cl" style="top:334.00px"><span class="ln">26</span><span style="color:#c1c1c1">[</span><span style="color:#508fc3">assembly</span><span style="color:#c1c1c1">: </span><span style="color:#49b7a1">AssemblyTrademark</span><span style="color:#c1c1c1">(</span><span style="color:#c3907a">””</span><span style="color:#c1c1c1">)]</span></div>
<div class="cl" style="top:359.00px"><span class="ln">27</span><span style="color:#c1c1c1">[</span><span style="color:#508fc3">assembly</span><span style="color:#c1c1c1">: </span><span style="color:#49b7a1">CLSCompliant</span><span style="color:#c1c1c1">(</span><span style="color:#508fc3">true</span><span style="color:#c1c1c1">)]</span></div>
<div class="cl" style="top:385.00px"><span class="ln">28</span><span style="color:#c1c1c1">[</span><span style="color:#508fc3">assembly</span><span style="color:#c1c1c1">: </span><span style="color:#49b7a1">AllowPartiallyTrustedCallers</span><span style="color:#c1c1c1">]</span></div>
<div class="cl" style="top:407.00px"><span class="ln">29</span></div>
</div>
<div class="t" id="wm" style="left:857px;top:627px;font-size:49px;color:#4f4f4f;transform:rotate(-41.5deg);transform-origin:0 0">SecHub平台</div>
<div class="a" style="left:1914px;top:128px;width:26px;height:568px;background:#3e3e42"></div>
<svg class="a" style="left:1920px;top:137px" width="14" height="8" viewBox="0 0 14 8"><path d="M0 8h14L7 0z" fill="#999"/></svg>
<div class="a" style="left:1920px;top:275px;width:14px;height:234px;background:#686868"></div>
<svg class="a" style="left:1920px;top:679px" width="14" height="7" viewBox="0 0 14 7"><path d="M0 0h14L7 7z" fill="#999"/></svg>
<div class="a" style="left:483px;top:696px;width:1457px;height:26px;background:#3e3e42"></div>
<div class="a" style="left:395px;top:696px;width:88px;height:26px;background:#3f3f46"></div>
<div class="a" style="left:397px;top:698px;width:68px;height:22px;background:#1e1e1e"></div>
<div class="a" style="left:467px;top:698px;width:14px;height:22px;background:#1e1e1e"></div>
<div class="t" style="left:403px;top:701px;font-size:18px;letter-spacing:-0.5px;color:#f1f1f1">100 %</div>
<svg class="a" style="left:470px;top:707px" width="9" height="5" viewBox="0 0 9 5"><path d="M0 0h9L4.5 5z" fill="#999"/></svg>
<svg class="a" style="left:494px;top:703px" width="9" height="13" viewBox="0 0 9 13"><path d="M9 0v13L0 6.5z" fill="#555"/></svg>
<svg class="a" style="left:1897px;top:702px" width="8" height="13" viewBox="0 0 8 13"><path d="M0 0v13L8 6.5z" fill="#555"/></svg>

<!-- SEARCH PANEL -->
<div class="a" style="left:395px;top:731px;width:1545px;height:375px;border:2px solid #3f3f46;background:#252526"></div>
<div class="a" style="left:397px;top:733px;width:1541px;height:33px;background:#2d2d30"></div>
<div class="t" style="left:403px;top:740px;font-size:18px;color:#f1f1f1">搜索</div>
<svg class="a" style="left:456px;top:745px" width="1424" height="8"><defs><pattern id="g2" width="6" height="6" patternUnits="userSpaceOnUse"><rect x="0" y="0" width="2" height="2" fill="#434347"/><rect x="3" y="3" width="2" height="2" fill="#434347"/></pattern></defs><rect width="1424" height="8" fill="url(#g2)"/></svg>
<svg class="a" style="left:1892px;top:745px" width="12" height="7" viewBox="0 0 12 7"><path d="M0 0h12L6 7z" fill="#f1f1f1"/></svg>
<svg class="a" style="left:1916px;top:742px" width="15" height="14" viewBox="0 0 15 14"><path d="M1 1L14 13M14 1L1 13" stroke="#f1f1f1" stroke-width="2.2"/></svg>
<div class="a" style="left:397px;top:766px;width:996px;height:40px;border:2px solid #3f3f46;background:#333337"></div>
<svg class="a" style="left:1403px;top:769px" width="30" height="30" viewBox="0 0 30 30"><circle cx="15" cy="15" r="13.5" fill="none" stroke="#e6e6e6" stroke-width="2"/><path d="M9.5 12.5L15 18l5.5-5.5" fill="none" stroke="#f1f1f1" stroke-width="3"/></svg>
<div class="t" style="left:1437px;top:776px;font-size:18px;color:#f1f1f1">选项</div>
<div class="t" style="left:1484px;top:777px;font-size:18px;color:#f1f1f1">搜索<span style="margin-left:2px">:</span></div>
<div class="a" style="left:1547px;top:770px;width:193px;height:30px;background:#3f3f46"></div>
<div class="a" style="left:1549px;top:772px;width:172px;height:26px;background:#252526"></div>
<div class="a" style="left:1723px;top:772px;width:15px;height:26px;background:#2d2d30"></div>
<svg class="a" style="left:1550px;top:773px" width="24" height="24" viewBox="0 0 24 24">
 <path d="M9 1.4L13.3 5.8 6 13.6 1.6 9z" fill="#f2c98e"/>
 <path d="M19.4 7.3L23 10.9 19.4 14.5 15.8 10.9z" fill="#f2c98e"/>
 <path d="M18.8 15.5L22.4 19.1 18.8 22.7 15.2 19.1z" fill="#f2c98e"/>
 <path d="M10 10.2H17M13.2 10.2V17.4H17" fill="none" stroke="#f2c98e" stroke-width="1.6"/>
</svg>
<div class="t" style="left:1580px;top:776px;font-size:18px;color:#f1f1f1">以上所有</div>
<svg class="a" style="left:1724px;top:782px" width="11" height="6" viewBox="0 0 11 6"><path d="M0 0h11L5.5 6z" fill="#999"/></svg>
<div class="a" style="left:1743px;top:770px;width:195px;height:30px;background:#3f3f46"></div>
<div class="a" style="left:1745px;top:772px;width:174px;height:26px;background:#252526"></div>
<div class="a" style="left:1921px;top:772px;width:15px;height:26px;background:#2d2d30"></div>
<div class="t" style="left:1746px;top:776px;font-size:18px;color:#f1f1f1">所选类型</div>
<svg class="a" style="left:1922px;top:782px" width="11" height="6" viewBox="0 0 11 6"><path d="M0 0h11L5.5 6z" fill="#999"/></svg>

</body></html>
